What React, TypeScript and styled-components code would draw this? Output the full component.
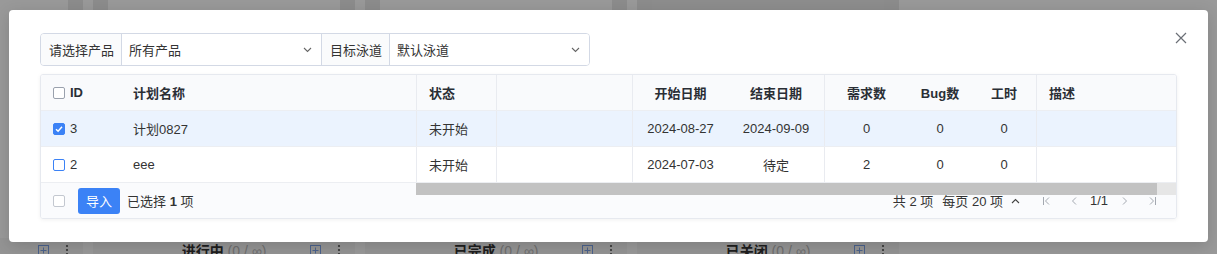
import React from 'react';
import styled, { createGlobalStyle, css } from 'styled-components';

const GlobalStyle = createGlobalStyle`
  * { box-sizing: border-box; }
  html, body {
    margin: 0;
    padding: 0;
    height: 254px;
    overflow: hidden;
  }
  body {
    font-family: "Liberation Sans", "Noto Sans CJK SC", sans-serif;
    font-size: 13px;
    color: #333;
  }
`;

type Plan = {
    id: number;
    name: string;
    status: string;
    start: string;
    end: string;
    stories: number;
    bugs: number;
    hours: number;
    checked: boolean;
};

const plans: Plan[] = [
    { id: 3, name: '计划0827', status: '未开始', start: '2024-08-27', end: '2024-09-09', stories: 0, bugs: 0, hours: 0, checked: true },
    { id: 2, name: 'eee', status: '未开始', start: '2024-07-03', end: '待定', stories: 2, bugs: 0, hours: 0, checked: false },
];

const lanes = [
    { title: '未开始', top: false },
    { title: '进行中', top: false },
    { title: '已完成', top: false },
    { title: '已关闭', top: true },
];

const Chevron = ({ up }: { up?: boolean }) => (
    <svg width="9" height="6" viewBox="0 0 9 6" fill="none">
        <path d={up ? 'M1 5L4.5 1.5L8 5' : 'M1 1L4.5 4.5L8 1'} stroke="currentColor" strokeWidth="1.1" />
    </svg>
);

const PagerIcon = ({ kind }: { kind: 'first' | 'prev' | 'next' | 'last' }) => {
    const paths: Record<string, string> = {
        first: 'M1.5 1V9M7 1.5L3.5 5L7 8.5',
        prev: 'M6 1.5L2.5 5L6 8.5',
        next: 'M3 1.5L6.5 5L3 8.5',
        last: 'M7.5 1V9M2 1.5L5.5 5L2 8.5',
    };
    return (
        <svg width="9" height="10" viewBox="0 0 9 10" fill="none">
            <path d={paths[kind]} stroke="currentColor" strokeWidth="1" />
        </svg>
    );
};

export default function App() {
    return (
        <Page>
            <GlobalStyle />
            <Board>
                {lanes.map((lane) => (
                    <Lane key={lane.title}>
                        <LaneTop $tinted={lane.top}>
                            <LaneTopBlock />
                            <LaneTopBlock />
                        </LaneTop>
                        <LaneHeader>
                            <span />
                            <LaneTitle>
                                {lane.title} <LaneCount>(0 / ∞)</LaneCount>
                            </LaneTitle>
                            <LaneActions>
                                <svg width="11" height="11" viewBox="0 0 11 11" fill="none">
                                    <rect x="0.5" y="0.5" width="10" height="10" stroke="#7ea3ea" />
                                    <path d="M5.5 2.5V8.5M2.5 5.5H8.5" stroke="#7ea3ea" />
                                </svg>
                                <svg width="4" height="12" viewBox="0 0 4 12" fill="#555">
                                    <circle cx="2" cy="2" r="1.1" />
                                    <circle cx="2" cy="6" r="1.1" />
                                    <circle cx="2" cy="10" r="1.1" />
                                </svg>
                            </LaneActions>
                        </LaneHeader>
                    </Lane>
                ))}
            </Board>

            <Overlay>
                <Modal>
                    <CloseButton aria-label="关闭">
                        <svg width="12" height="12" viewBox="0 0 12 12" fill="none">
                            <path d="M1 1L11 11M11 1L1 11" stroke="#6b6f76" strokeWidth="1.2" />
                        </svg>
                    </CloseButton>

                    <FilterBar>
                        <FilterLabel $width={81}>请选择产品</FilterLabel>
                        <FilterSelect $width={200}>
                            所有产品
                            <Chevron />
                        </FilterSelect>
                        <FilterLabel $width={68}>目标泳道</FilterLabel>
                        <FilterSelect $width={199} $last>
                            默认泳道
                            <Chevron />
                        </FilterSelect>
                    </FilterBar>

                    <Table>
                        <Row $variant="head">
                            <Cell>
                                <Checkbox $state="default" />
                                ID
                            </Cell>
                            <Cell>计划名称</Cell>
                            <Cell $divider>状态</Cell>
                            <Cell $divider />
                            <Cell $divider $center>开始日期</Cell>
                            <Cell $center>结束日期</Cell>
                            <Cell $divider $center>需求数</Cell>
                            <Cell $center>Bug数</Cell>
                            <Cell $center>工时</Cell>
                            <Cell $divider>描述</Cell>
                        </Row>
                        {plans.map((p) => (
                            <Row key={p.id} $variant={p.checked ? 'selected' : 'plain'}>
                                <Cell>
                                    <Checkbox $state={p.checked ? 'checked' : 'active'}>
                                        {p.checked && (
                                            <svg width="8" height="8" viewBox="0 0 8 8" fill="none">
                                                <path d="M1 4.2L3.1 6.2L7 1.8" stroke="#fff" strokeWidth="1.5" />
                                            </svg>
                                        )}
                                    </Checkbox>
                                    {p.id}
                                </Cell>
                                <Cell>{p.name}</Cell>
                                <Cell $divider>{p.status}</Cell>
                                <Cell $divider />
                                <Cell $divider $center>{p.start}</Cell>
                                <Cell $center>{p.end}</Cell>
                                <Cell $divider $center>{p.stories}</Cell>
                                <Cell $center>{p.bugs}</Cell>
                                <Cell $center>{p.hours}</Cell>
                                <Cell $divider />
                            </Row>
                        ))}
                        <Footer>
                            <ScrollTrack>
                                <ScrollThumb />
                            </ScrollTrack>
                            <Checkbox $state="light" />
                            <ImportButton>导入</ImportButton>
                            <Selected>
                                已选择 <b>1</b> 项
                            </Selected>
                            <PagerGroup>
                                <Total>共 2 项</Total>
                                <PageSize>
                                    每页 20 项
                                    <Chevron up />
                                </PageSize>
                                <Pager>
                                    <NavButton><PagerIcon kind="first" /></NavButton>
                                    <NavButton><PagerIcon kind="prev" /></NavButton>
                                    <PageText>1/1</PageText>
                                    <NavButton><PagerIcon kind="next" /></NavButton>
                                    <NavButton><PagerIcon kind="last" /></NavButton>
                                </Pager>
                            </PagerGroup>
                        </Footer>
                    </Table>
                </Modal>
            </Overlay>
        </Page>
    );
}

const Page = styled.div`
    position: relative;
    width: 1217px;
    height: 254px;
    overflow: hidden;
    background: #fff;
`;

/* board behind the dialog */
const Board = styled.div`
    display: flex;
    gap: 10px;
    height: 262px;
    margin-left: -179px;
`;

const Lane = styled.div`
    flex: 0 0 262px;
    display: flex;
    flex-direction: column;
    justify-content: space-between;
`;

const LaneTop = styled.div<{ $tinted?: boolean }>`
    height: 12px;
    display: flex;
    justify-content: space-between;
    background: ${(p) => (p.$tinted ? '#ececec' : 'transparent')};
`;

const LaneTopBlock = styled.span`
    width: 15px;
    background: #e9e9e9;
`;

const LaneHeader = styled.div`
    height: 24px;
    display: grid;
    grid-template-columns: 1fr auto 1fr;
    align-items: center;
    background: #f7f7f7;
`;

const LaneTitle = styled.div`
    font-size: 14px;
    font-weight: 700;
    color: #333;
    white-space: nowrap;
`;

const LaneCount = styled.span`
    font-weight: 400;
    color: #b8b8b8;
`;

const LaneActions = styled.div`
    justify-self: end;
    display: flex;
    align-items: center;
    gap: 16px;
    padding-right: 14px;
`;

/* dialog */
const Overlay = styled.div`
    position: absolute;
    inset: 0;
    background: rgba(0, 0, 0, 0.4);
    display: flex;
    justify-content: center;
    align-items: flex-start;
    padding-top: 10px;
`;

const Modal = styled.div`
    position: relative;
    width: 1199px;
    height: 232px;
    padding: 23px 31px;
    display: flex;
    flex-direction: column;
    gap: 8px;
    background: #fff;
    border-radius: 4px;
    box-shadow: 0 4px 16px rgba(0, 0, 0, 0.15);
`;

const CloseButton = styled.button`
    position: absolute;
    top: 22px;
    right: 21px;
    width: 12px;
    height: 12px;
    padding: 0;
    border: none;
    background: none;
    display: flex;
    cursor: pointer;
`;

const FilterBar = styled.div`
    display: flex;
    align-self: flex-start;
    height: 33px;
    border: 1px solid #d3d9e5;
    border-radius: 4px;
    overflow: hidden;
`;

const FilterLabel = styled.div<{ $width: number }>`
    width: ${(p) => p.$width}px;
    display: flex;
    align-items: center;
    padding: 0 8px;
    background: #fafbfc;
    border-right: 1px solid #d3d9e5;
    white-space: nowrap;
    color: #333;
`;

const FilterSelect = styled.div<{ $width: number; $last?: boolean }>`
    width: ${(p) => p.$width}px;
    display: flex;
    align-items: center;
    justify-content: space-between;
    padding: 0 9px 0 7px;
    color: #333;
    background: #fff;
    ${(p) =>
        !p.$last &&
        css`
            border-right: 1px solid #d3d9e5;
        `}

    svg {
        color: #666;
    }
`;

const Table = styled.div`
    width: 1137px;
    border: 1px solid #e6e9ef;
    border-radius: 3px;
    box-shadow: 0 1px 4px rgba(0, 0, 0, 0.06);
    overflow: hidden;
`;

const rowBackgrounds = {
    head: '#f9fafc',
    selected: '#ebf3fe',
    plain: '#fff',
};

const Row = styled.div<{ $variant: keyof typeof rowBackgrounds }>`
    display: grid;
    grid-template-columns: 80px 295px 80px 136px 96px 96px 84px 64px 64px 1fr;
    height: 36px;
    border-bottom: 1px solid #eceef2;
    background: ${(p) => rowBackgrounds[p.$variant]};
    color: ${(p) => (p.$variant === 'head' ? '#2a2e35' : '#333')};
    font-weight: ${(p) => (p.$variant === 'head' ? 700 : 400)};
`;

const Cell = styled.div<{ $center?: boolean; $divider?: boolean }>`
    display: flex;
    align-items: center;
    gap: 5px;
    padding: 0 12px;
    white-space: nowrap;
    justify-content: ${(p) => (p.$center ? 'center' : 'flex-start')};
    ${(p) =>
        p.$divider &&
        css`
            border-left: 1px solid #e9ebf0;
        `}
`;

const checkboxStates = {
    default: css`
        border-color: #9aa1ad;
        background: #fff;
    `,
    active: css`
        border-color: #3b82f6;
        background: #fff;
    `,
    light: css`
        border-color: #c3c8d0;
        background: #fff;
    `,
    checked: css`
        border-color: #3b82f6;
        background: #3b82f6;
    `,
};

const Checkbox = styled.span<{ $state: keyof typeof checkboxStates }>`
    flex: none;
    width: 12px;
    height: 12px;
    border: 1px solid;
    border-radius: 2px;
    display: flex;
    align-items: center;
    justify-content: center;
    ${(p) => checkboxStates[p.$state]}
`;

const Footer = styled.div`
    position: relative;
    height: 35px;
    display: flex;
    align-items: center;
    padding: 0 10px 0 12px;
    background: #fafbfd;
`;

const ScrollTrack = styled.div`
    position: absolute;
    top: 0;
    left: 375px;
    right: 0;
    height: 12px;
    background: #e6e6e6;
`;

const ScrollThumb = styled.div`
    width: calc(100% - 19px);
    height: 100%;
    background: #c2c2c2;
`;

const ImportButton = styled.button`
    margin-left: 13px;
    width: 42px;
    height: 26px;
    padding: 0;
    border: none;
    border-radius: 3px;
    background: #3b82f6;
    color: #fff;
    font: inherit;
    cursor: pointer;
`;

const Selected = styled.span`
    margin-left: 7px;
    color: #333;

    b {
        font-weight: 700;
    }
`;

const PagerGroup = styled.div`
    margin-left: auto;
    display: flex;
    align-items: center;
`;

const Total = styled.span`
    color: #333;
    margin-right: 9px;
`;

const PageSize = styled.span`
    display: flex;
    align-items: center;
    gap: 8px;
    color: #333;
    margin-right: 12px;

    svg {
        color: #444;
    }
`;

const Pager = styled.div`
    display: flex;
    align-items: center;
`;

const NavButton = styled.span`
    width: 28px;
    height: 24px;
    display: flex;
    align-items: center;
    justify-content: center;
    color: #a3a8b0;
`;

const PageText = styled.span`
    width: 22px;
    text-align: center;
    color: #333;
`;
